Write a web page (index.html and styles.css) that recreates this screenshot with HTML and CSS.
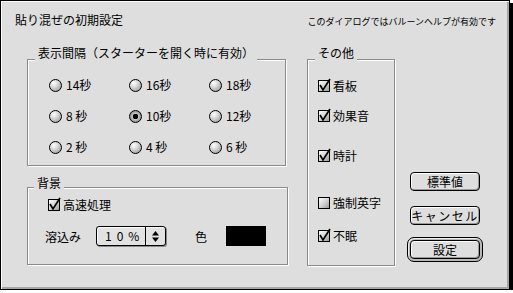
FILE: index.html
```html
<!DOCTYPE html>
<html>
	<head>
		<meta charset="UTF-8">
		<title>貼り混ぜの初期設定</title>
		<link rel="stylesheet" href="styles.css">
	</head>
	<body>
		<div class="dialog">
			<div class="header">
				<div class="title">貼り混ぜの初期設定</div>
				<div class="balloon">このダイアログではバルーンヘルプが有効です</div>
			</div>
			<div class="main">
				<div class="col-left">
					<div class="group interval">
						<span class="legend">表示間隔（スターターを開く時に有効）</span>
						<div class="radios">
							<div class="radio"><span class="dot"></span>14秒</div>
							<div class="radio"><span class="dot"></span>16秒</div>
							<div class="radio"><span class="dot"></span>18秒</div>
							<div class="radio"><span class="dot"></span>8 秒</div>
							<div class="radio"><span class="dot on"></span>10秒</div>
							<div class="radio"><span class="dot"></span>12秒</div>
							<div class="radio"><span class="dot"></span>2 秒</div>
							<div class="radio"><span class="dot"></span>4 秒</div>
							<div class="radio"><span class="dot"></span>6 秒</div>
						</div>
					</div>
					<div class="group backdrop">
						<span class="legend">背景</span>
						<div class="check-row"><span class="cb"><svg width="15" height="16"><polyline points="3,9 6,14 13,3"/></svg></span>高速処理</div>
						<div class="fade-row">
							<span class="fade-label">溶込み</span>
							<div class="popup">
								<span class="popup-value">10%</span>
								<span class="popup-arrows"><svg width="7" height="11"><path d="M0 4.5L3.5 0L7 4.5Z M0 6.5L3.5 11L7 6.5Z"/></svg></span>
							</div>
							<span class="color-label">色</span>
							<span class="swatch"></span>
						</div>
					</div>
				</div>
				<div class="group other">
					<span class="legend">その他</span>
					<div class="check-row"><span class="cb"><svg width="15" height="16"><polyline points="3,9 6,14 13,3"/></svg></span>看板</div>
					<div class="check-row sp14"><span class="cb"><svg width="15" height="16"><polyline points="3,9 6,14 13,3"/></svg></span>効果音</div>
					<div class="check-row sp24"><span class="cb"><svg width="15" height="16"><polyline points="3,9 6,14 13,3"/></svg></span>時計</div>
					<div class="check-row sp31"><span class="cb"></span>強制英字</div>
					<div class="check-row sp17"><span class="cb"><svg width="15" height="16"><polyline points="3,9 6,14 13,3"/></svg></span>不眠</div>
				</div>
				<div class="buttons">
					<button class="btn">標準値</button>
					<button class="btn cancel">キャンセル</button>
					<div class="default-ring"><button class="btn">設定</button></div>
				</div>
			</div>
		</div>
	</body>
</html>
```

FILE: styles.css
```css
*{
	margin: 0;
	padding: 0;
	box-sizing: border-box;
}
body{
	background: #fff;
	font-family: "Noto Sans CJK JP", "Noto Sans", sans-serif;
	font-size: 12px;
	color: #000;
}
.dialog{
	width: 510px;
	height: 290px;
	border: 1px solid #000;
	background: #dedede;
	box-shadow: inset 1px 1px 0 #fff, inset -2px -2px 0 #a6a6a6, 3px 3px 0 #000;
}
.header{
	display: flex;
	justify-content: space-between;
	height: 26px;
	padding: 12px 13px 0 14px;
}
.title{
	line-height: 14px;
}
.balloon{
	font-size: 9px;
	line-height: 14px;
	padding-top: 2px;
}
.main{
	display: flex;
	align-items: flex-start;
	padding-left: 26px;
}
.col-left{
	width: 261px;
	margin-top: 32px;
}
.group{
	position: relative;
	border: 1px solid #8a8a8a;
	box-shadow: inset 1px 1px 0 #fff, 1px 1px 0 #fff;
}
.legend{
	position: absolute;
	top: -14px;
	left: 7px;
	padding: 0 3px 2px;
	background: #dedede;
	line-height: 14px;
	white-space: nowrap;
}
.interval{
	width: 259px;
	height: 107px;
	padding: 17px 0 0 21px;
}
.radios{
	display: grid;
	grid-template-columns: repeat(3, 80px);
	row-gap: 15px;
}
.radio{
	display: flex;
	align-items: center;
	height: 16px;
	line-height: 16px;
}
.dot{
	flex: none;
	width: 13px;
	height: 13px;
	margin-right: 4px;
	border: 1px solid #000;
	border-radius: 50%;
	background: radial-gradient(circle at 35% 30%, #fff 0, #d6d6d6 40%, #8a8a8a 100%);
}
.dot.on{
	background: radial-gradient(circle, #000 0 2.5px, #c8c8c8 3px, #5a5a5a 100%);
}
.backdrop{
	width: 261px;
	height: 78px;
	margin-top: 21px;
	padding: 9px 0 0 20px;
}
.backdrop .legend{
	top: -12px;
	left: 6px;
}
.check-row{
	display: flex;
	align-items: center;
	height: 16px;
	line-height: 16px;
	white-space: nowrap;
}
.cb{
	position: relative;
	flex: none;
	width: 12px;
	height: 12px;
	margin-right: 3px;
	border: 1px solid #000;
	background: linear-gradient(135deg, #fff, #cfcfcf 55%, #9a9a9a);
}
.cb svg{
	position: absolute;
	left: -2px;
	top: -5px;
	overflow: visible;
}
.cb polyline{
	fill: none;
	stroke: #000;
	stroke-width: 1.7;
}
.fade-row{
	display: flex;
	align-items: center;
	height: 20px;
	margin: 13px 0 0 -3px;
}
.fade-label{
	width: 51px;
}
.popup{
	display: flex;
	width: 70px;
	height: 20px;
	border: 1px solid #000;
	border-radius: 3px;
	background: #e2e2e2;
	box-shadow: inset 1px 1px 0 #fff, 1px 1px 0 #8a8a8a;
}
.popup-value{
	width: 49px;
	padding-left: 8px;
	border-right: 1px solid #000;
	line-height: 18px;
	letter-spacing: 5px;
}
.popup-arrows{
	flex: 1;
	display: flex;
	align-items: center;
	justify-content: center;
}
.color-label{
	margin-left: 29px;
}
.swatch{
	width: 40px;
	height: 20px;
	margin-left: 19px;
	background: #000;
}
.other{
	width: 88px;
	height: 207px;
	margin: 32px 0 0 19px;
	padding: 18px 0 0 10px;
}
.sp14{ margin-top: 14px; }
.sp24{ margin-top: 24px; }
.sp31{ margin-top: 31px; }
.sp17{ margin-top: 17px; }
.buttons{
	display: flex;
	flex-direction: column;
	width: 70px;
	margin: 145px 0 0 15px;
}
.btn{
	width: 70px;
	height: 19px;
	border: 1px solid #000;
	border-radius: 4px;
	background: #dedede;
	box-shadow: inset 1px 1px 0 #fff, inset -1px -1px 0 #999;
	font: inherit;
	line-height: 17px;
	text-align: center;
	color: #000;
}
.cancel{
	margin-top: 15px;
	letter-spacing: 1.5px;
}
.default-ring{
	width: 76px;
	margin: 12px 0 0 -3px;
	padding: 2px;
	border: 1px solid #000;
	border-radius: 7px;
	background: #b8b8b8;
	box-shadow: inset 1px 1px 0 #eee;
}
```
